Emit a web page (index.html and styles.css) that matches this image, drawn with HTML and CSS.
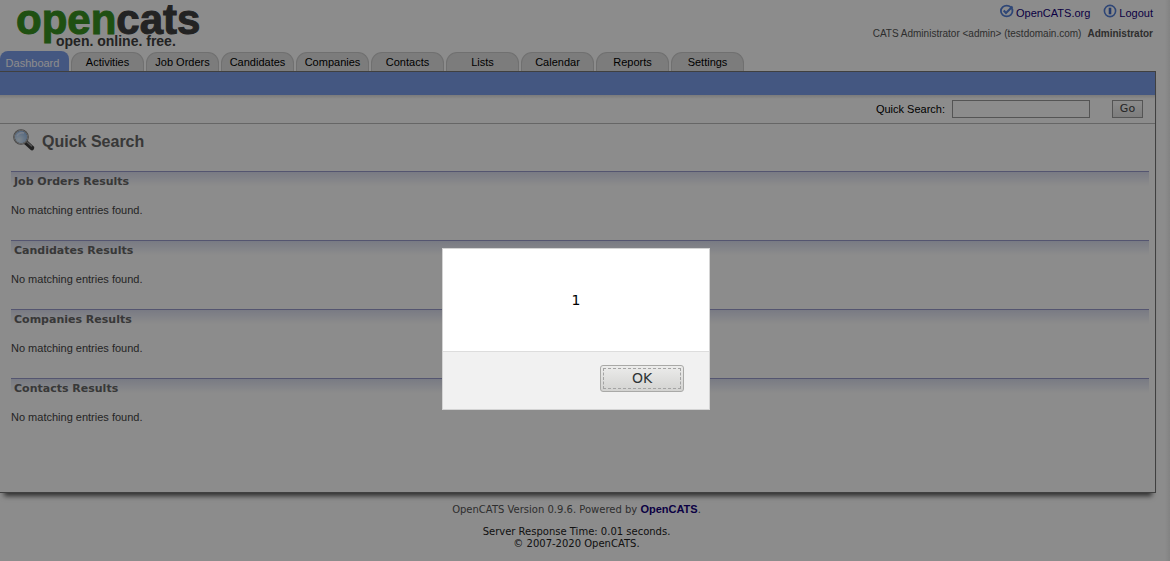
FILE: index.html
```html
<!DOCTYPE html>
<html lang="en">
<head>
<meta charset="utf-8">
<title>OpenCATS - Quick Search</title>
<link rel="stylesheet" href="styles.css">
</head>
<body>
<div class="page">
  <header class="header">
    <div class="logo">
      <div class="logo-name"><span class="logo-open">open</span>cats</div>
      <div class="logo-tag">open. online. free.</div>
    </div>
    <div class="account">
      <nav class="account-links">
        <a href="#">
          <svg class="icon" viewBox="0 0 14 14" aria-hidden="true"><ellipse cx="6.7" cy="7" rx="5.8" ry="5.4" fill="none" stroke="#5580d8" stroke-width="1.8"/><path d="M3.7 6.5 6 9l6.5-6.5" fill="none" stroke="#5580d8" stroke-width="2"/></svg>
          <span>OpenCATS.org</span></a>
        <a href="#">
          <svg class="icon" viewBox="0 0 14 14" aria-hidden="true"><circle cx="7" cy="7" r="5.6" fill="none" stroke="#5580d8" stroke-width="1.6"/><path d="M7 3.7v6.6" stroke="#3f68c8" stroke-width="2.6"/></svg>
          <span>Logout</span></a>
      </nav>
      <div class="user"><span>CATS Administrator &lt;admin&gt; (testdomain.com)</span><strong>Administrator</strong></div>
    </div>
  </header>
  <nav class="tabs">
    <a class="tab tab-active" href="#">Dashboard</a>
    <a class="tab" href="#">Activities</a>
    <a class="tab" href="#">Job Orders</a>
    <a class="tab" href="#">Candidates</a>
    <a class="tab" href="#">Companies</a>
    <a class="tab" href="#">Contacts</a>
    <a class="tab" href="#">Lists</a>
    <a class="tab" href="#">Calendar</a>
    <a class="tab" href="#">Reports</a>
    <a class="tab" href="#">Settings</a>
  </nav>
  <main class="main">
    <div class="subtabs"></div>
    <form class="search">
      <label for="quick">Quick Search:</label>
      <input id="quick" class="search-input" type="text">
      <button class="search-go" type="button">Go</button>
    </form>
    <div class="contents">
      <div class="title">
        <svg class="title-icon" viewBox="0 0 24 24" aria-hidden="true">
          <defs><radialGradient id="lens" cx=".35" cy=".7" r=".7"><stop offset="0" stop-color="#e4f3ff"/><stop offset="1" stop-color="#98bdea"/></radialGradient></defs>
          <path d="m14 14.5 6 5.5" stroke="#3c3c3c" stroke-width="4.5" stroke-linecap="round"/>
          <path d="m15 14 4.5 4" stroke="#999" stroke-width="1.5" stroke-linecap="round"/>
          <circle cx="9" cy="9" r="7" fill="url(#lens)" stroke="#777" stroke-width="1.6"/>
          <circle cx="9" cy="9" r="6.8" fill="none" stroke="#bbb" stroke-width="1"/>
          <path d="M5 8q2-4 7-3" fill="none" stroke="#dceaff" stroke-width="1.4"/>
        </svg>
        <h1>Quick Search</h1>
      </div>
      <section class="result"><h2>Job Orders Results</h2><p>No matching entries found.</p></section>
      <section class="result"><h2>Candidates Results</h2><p>No matching entries found.</p></section>
      <section class="result"><h2>Companies Results</h2><p>No matching entries found.</p></section>
      <section class="result"><h2>Contacts Results</h2><p>No matching entries found.</p></section>
    </div>
  </main>
  <footer class="footer">
    <p class="version">OpenCATS Version 0.9.6. Powered by <a href="#">OpenCATS</a>.</p>
    <p>Server Response Time: 0.01 seconds.</p>
    <p>© 2007-2020 OpenCATS.</p>
  </footer>
</div>
<div class="overlay">
  <div class="dialog" role="alertdialog" aria-modal="true" aria-labelledby="message">
    <div class="dialog-message" id="message">1</div>
    <div class="dialog-actions"><button class="dialog-ok" type="button"><span>OK</span></button></div>
  </div>
</div>
</body>
</html>
```
FILE: styles.css
```css
* { box-sizing: border-box; }
body {
  margin: 0;
  min-height: 100vh;
  background: linear-gradient(to left, #eee, #fff 5px);
  color: #444;
  font: 11px/14px "Liberation Sans", Arial, sans-serif;
}
h1, h2, p { margin: 0; }
a { color: #14007a; text-decoration: none; }
.page { padding-right: 14px; }

.header { display: flex; justify-content: space-between; height: 51px; }
.logo { padding-left: 16px; }
.logo-name {
  height: 34px;
  color: #404040;
  font-size: 42px;
  font-weight: bold;
  line-height: 40px;
  -webkit-text-stroke: 1px;
}
.logo-open { color: #399222; }
.logo-tag {
  padding-left: 40px;
  color: #404040;
  font-size: 14px;
  font-weight: bold;
  line-height: 14px;
  text-shadow: 0 0 2px #fff, 0 0 2px #fff, 0 0 2px #fff;
}
.account {
  display: flex;
  flex-direction: column;
  align-items: flex-end;
  gap: 8px;
  padding: 4px 3px 0 0;
}
.account-links { display: flex; gap: 13px; }
.account-links a { display: flex; gap: 2px; }
.account-links span { padding-top: 2px; }
.icon { width: 14px; height: 14px; }
.user { display: flex; gap: 6px; color: #555; font-size: 10px; line-height: 12px; }

.tabs { display: flex; align-items: flex-end; gap: 2px; height: 20px; }
.tab {
  width: 73px;
  height: 19px;
  border: 1px solid #ccc;
  border-bottom: 0;
  border-radius: 11px 11px 0 0;
  background: #e2e2e2;
  color: #000;
  line-height: 19px;
  text-align: center;
}
.tab-active {
  width: 69px;
  height: 20px;
  padding-right: 4px;
  border: 0;
  border-radius: 8px 8px 0 0;
  background: #7c9eec;
  color: #fff;
  line-height: 24px;
}

.main {
  border: solid #757575;
  border-width: 1px 1px 1px 0;
  box-shadow: 0 7px 5px -4px #555;
}
.subtabs { height: 23px; background: #7c9eec; }
.search {
  display: flex;
  align-items: center;
  justify-content: flex-end;
  height: 29px;
  padding-right: 12px;
  border-bottom: 1px solid #bbb;
  background: linear-gradient(#e0e0e0, #fff 4px);
  color: #000;
}
.search-input {
  width: 138px;
  height: 18px;
  margin: 0 22px 0 7px;
  border: 1px solid #999;
  background: #fff;
}
.search-go {
  width: 31px;
  height: 18px;
  padding: 0;
  border: 1px solid #999;
  background: linear-gradient(#fff, #e4e4e4);
  color: #444;
  font: 11px/14px "DejaVu Sans", sans-serif;
}
.contents { padding: 4px 6px 45px 11px; }
.title { display: flex; gap: 6px; height: 43px; padding-left: 1px; }
.title-icon { width: 24px; height: 24px; }
.title h1 { color: #666; font-size: 16px; line-height: 27px; }
.result { height: 69px; }
.result h2 {
  height: 21px;
  padding-left: 3px;
  border-top: 1px solid #9a9ccc;
  background: linear-gradient(#dcdff0, #fff 14px);
  color: #666;
  font: bold 11px/20px "DejaVu Sans", sans-serif;
}
.result p { padding-top: 11px; }

.footer {
  padding: 9px 3px 10px 0;
  color: #222;
  font: 10px/12px "DejaVu Sans", sans-serif;
  text-align: center;
}
.version { padding-bottom: 9px; color: #555; line-height: 14px; }
.version a { font: bold 11px/14px "Liberation Sans", sans-serif; }

.overlay {
  position: fixed;
  inset: 0;
  display: flex;
  align-items: center;
  justify-content: center;
  padding: 97px 18px 0 0;
  background: rgba(0, 0, 0, .45);
}
.dialog {
  width: 268px;
  border: 1px solid #d4d4d4;
  background: #fff;
  color: #000;
  font: 14px/16px "DejaVu Sans", sans-serif;
}
.dialog-message { padding: 43px 20px; text-align: center; }
.dialog-actions {
  display: flex;
  justify-content: flex-end;
  padding: 13px 25px 17px;
  border-top: 1px solid #ddd;
  background: #f1f1f1;
}
.dialog-ok {
  width: 84px;
  height: 27px;
  padding: 2px;
  border: 1px solid #a9a9a7;
  border-radius: 3px;
  background: linear-gradient(#ececeb, #d3d3d1);
  color: #2e3436;
  font: 14px/19px "DejaVu Sans", sans-serif;
}
.dialog-ok span { display: block; border: 1px dashed #a4a4a4; }
```
